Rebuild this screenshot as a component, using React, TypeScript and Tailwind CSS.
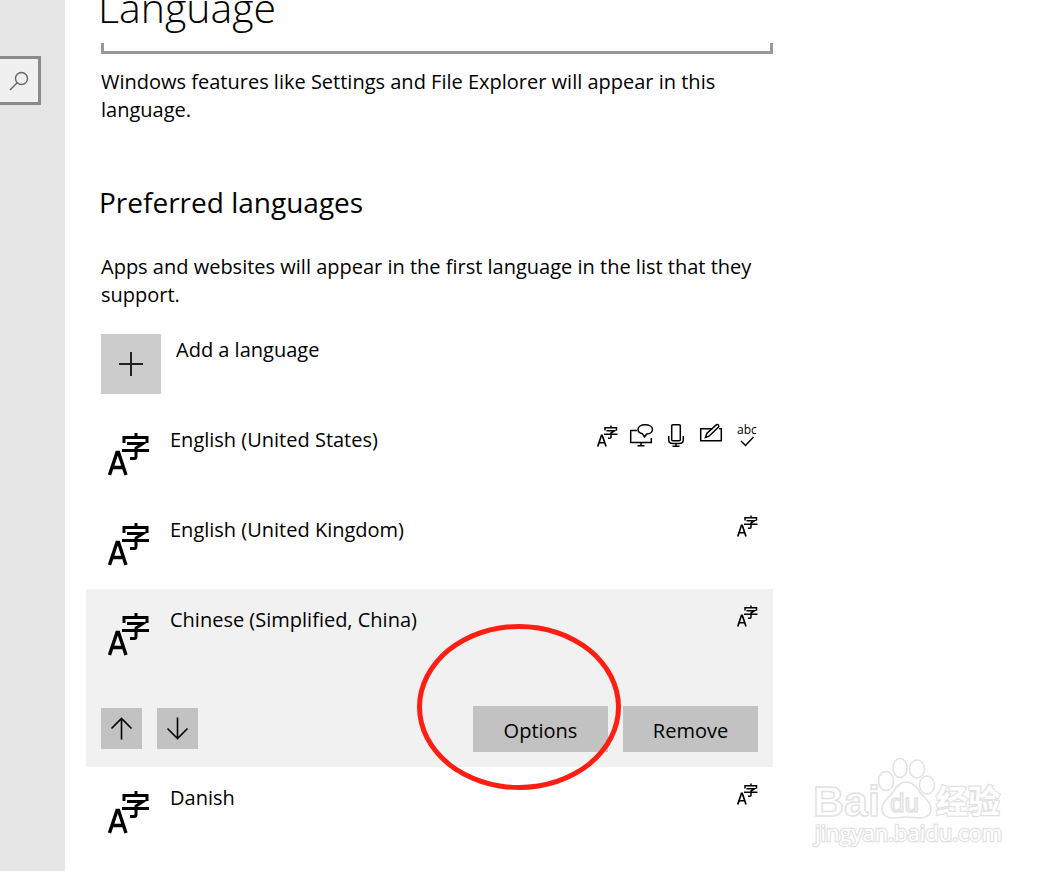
import type { ReactNode } from "react";

type Feature = "display" | "speech" | "mic" | "pen" | "spell";

type Language = {
  name: string;
  features: Feature[];
};

const LANGUAGES: Language[] = [
  {
    name: "English (United States)",
    features: ["display", "speech", "mic", "pen", "spell"],
  },
  { name: "English (United Kingdom)", features: ["display"] },
  { name: "Chinese (Simplified, China)", features: ["display"] },
  { name: "Danish", features: ["display"] },
];

const SELECTED = "Chinese (Simplified, China)";

function LanguageIcon({ className }: { className: string }) {
  return (
    <svg
      viewBox="0 0 42 44"
      className={className}
      fill="none"
      stroke="black"
      strokeWidth="3"
      aria-hidden="true"
    >
      <path
        d="M1.500 43L9 20.500h1.500L18 43M4.500 35.500h10.500"
        strokeWidth="3.400"
      />
      <path d="M28 1v5M16 11V5.500h23V11" />
      <path d="M19 11.500h16L28 16v8.500q0 2-2 2h-4M14 18.500h27" />
    </svg>
  );
}

function Stroke({ children }: { children: ReactNode }) {
  return (
    <svg
      viewBox="0 0 24 24"
      className="size-6 overflow-visible"
      fill="none"
      stroke="black"
      strokeWidth="1.5"
      aria-hidden="true"
    >
      {children}
    </svg>
  );
}

function FeatureIcon({ type }: { type: Feature }) {
  switch (type) {
    case "display":
      return <LanguageIcon className="h-[22px] w-[21px]" />;
    case "speech":
      return (
        <Stroke>
          <path d="M8 6.500H1.700v12h20.600V14M12 18.500v3M8.500 21.700h7" />
          <path d="M13.500 9.800C10.500 9 9 7.500 9 5.400 9 2.700 12 .7 16.200.7s7.300 2 7.300 4.700-2.800 4.400-5.800 4.600L15.500 13z" />
        </Stroke>
      );
    case "mic":
      return (
        <Stroke>
          <rect x="7.700" y=".7" width="8.600" height="16" rx="1" />
          <path d="M4.700 12v3.500c0 2.600 1.500 4 4 4h6.600c2.500 0 4-1.400 4-4V12M12 19.500v3M8.500 22.200h7" />
        </Stroke>
      );
    case "pen":
      return (
        <Stroke>
          <path d="M13.500 4.700H1.700v12h20.600v-12H20" />
          <path d="M6.500 13.500l1.300-4L17.500.7c1.300-.8 3 .9 2 2.300L10 12.200z" />
        </Stroke>
      );
    case "spell":
      return (
        <Stroke>
          <text
            x="3"
            y="10"
            fill="black"
            stroke="none"
            className="font-['Open_Sans',sans-serif] text-[12px]"
          >
            abc
          </text>
          <path d="M7 17l4.500 4.500 8-8.500" />
        </Stroke>
      );
  }
}

function MoveButton({ label, path }: { label: string; path: string }) {
  return (
    <button
      type="button"
      aria-label={label}
      className="flex size-[41px] items-center justify-center bg-[#c2c2c2]"
    >
      <svg
        viewBox="0 0 23 23"
        className="size-[23px]"
        fill="none"
        stroke="black"
        strokeWidth="1.6"
      >
        <path d={path} />
      </svg>
    </button>
  );
}

function LanguageRow({ name, features }: Language) {
  const selected = name === SELECTED;

  return (
    <li className={selected ? "relative bg-[#f1f1f1]" : ""}>
      <div className="flex h-[90px] items-start pl-[22px] pr-[15px]">
        <LanguageIcon className="mt-[23px] h-11 w-[42px]" />
        <span className="ml-5 mt-[17px] flex-1">{name}</span>
        <div className="mt-[15px] flex h-6 items-center gap-[11px]">
          {features.map((type) => (
            <FeatureIcon key={type} type={type} />
          ))}
        </div>
      </div>

      {selected && (
        <>
          <div className="flex items-start gap-[15px] px-[15px] pb-[15px] pt-[27px]">
            <div className="flex gap-[15px] pt-[2px]">
              <MoveButton
                label="Move up"
                path="M11.500 22.500V1.500M1.500 11.500l10-10 10 10"
              />
              <MoveButton
                label="Move down"
                path="M11.500 .5v21M1.500 11.500l10 10 10-10"
              />
            </div>
            <button
              type="button"
              className="ml-auto h-[46px] w-[135px] bg-[#c2c2c2] pt-1"
            >
              Options
            </button>
            <button
              type="button"
              className="h-[46px] w-[135px] bg-[#c2c2c2] pt-1"
            >
              Remove
            </button>
          </div>
          {/* Red marker round the Options button */}
          <div className="pointer-events-none absolute right-[152px] top-[35px] z-10 h-[166px] w-[204px] rounded-[50%] border-[5px] border-[#ff1f12]" />
        </>
      )}
    </li>
  );
}

function Watermark() {
  return (
    <svg
      viewBox="0 0 200 100"
      className="pointer-events-none absolute bottom-[19px] right-[52px] h-[100px] w-[200px]"
      fill="white"
      stroke="#e2e2e2"
      strokeWidth="1.500"
      aria-hidden="true"
    >
      <text
        x="3"
        y="64"
        className="font-['Liberation_Sans',sans-serif] text-[43px] font-bold"
      >
        Bai
      </text>
      <ellipse cx="76" cy="29" rx="7.500" ry="9.500" />
      <ellipse cx="90" cy="16" rx="7" ry="9.500" />
      <ellipse cx="107" cy="17" rx="7.500" ry="9" />
      <ellipse cx="117" cy="33" rx="7.500" ry="9" />
      <path d="M96 30c-6 0-9 4-12 9-4 6-12 10-12 18 0 6 5 9 10 9 6 0 9-1 14-1s9 1 14 1c6 0 11-3 11-9 0-8-8-12-12-18-3-5-7-9-13-9z" />
      <text
        x="80"
        y="60"
        className="font-['Liberation_Sans',sans-serif] text-[26px]"
      >
        du
      </text>
      <g strokeWidth="2.500" paintOrder="stroke">
        <text
          x="126"
          y="61"
          className="font-['Noto_Sans_CJK_SC',sans-serif] text-[32px] font-bold"
        >
          经验
        </text>
        <text
          x="5"
          y="89"
          className="font-['Open_Sans',sans-serif] text-[22px]"
        >
          jingyan.baidu.com
        </text>
      </g>
    </svg>
  );
}

export default function App() {
  return (
    <div className="relative flex min-h-screen bg-white font-['Open_Sans',sans-serif] text-[20px] leading-7 text-black">
      <aside className="w-[65px] shrink-0 bg-[#e6e6e6] pt-14">
        <button
          type="button"
          aria-label="Find a setting"
          className="flex h-[49px] w-[41px] items-center justify-center border-[3px] border-l-0 border-[#8a8a8a] bg-[#f0f0f0]"
        >
          <svg
            viewBox="0 0 20 20"
            className="size-5"
            fill="none"
            stroke="#666666"
            strokeWidth="1.4"
          >
            <circle cx="12.500" cy="7.500" r="6" />
            <path d="M8.200 11.800L1 19" />
          </svg>
        </button>
      </aside>

      <main className="ml-[21px] w-full max-w-[687px]">
        <header className="flex h-[43px] items-end overflow-hidden pb-2 pl-3">
          <h1 className="text-[41px] font-light leading-[56px]">Language</h1>
        </header>
        <div className="ml-[15px] h-[11px] border-[3px] border-t-0 border-[#999999]" />
        <p className="pl-[15px] pt-[14px]">
          Windows features like Settings and File Explorer will appear in this
          language.
        </p>

        <h2 className="pl-[13px] pt-[58px] text-[28px] leading-10">
          Preferred languages
        </h2>
        <p className="pl-[15px] pt-[31px]">
          Apps and websites will appear in the first language in the list that
          they support.
        </p>

        <button
          type="button"
          className="ml-[15px] mt-[25px] flex items-start gap-[15px]"
        >
          <span className="flex size-[60px] items-center justify-center bg-[#cccccc]">
            <svg viewBox="0 0 24 24" className="size-6" stroke="#222222">
              <path d="M12 0v24M0 12h24" strokeWidth="2" />
            </svg>
          </span>
          <span className="pt-[2px]">Add a language</span>
        </button>

        <ul className="mt-[15px]">
          {LANGUAGES.map((lang) => (
            <LanguageRow key={lang.name} {...lang} />
          ))}
        </ul>
      </main>

      <Watermark />
    </div>
  );
}
